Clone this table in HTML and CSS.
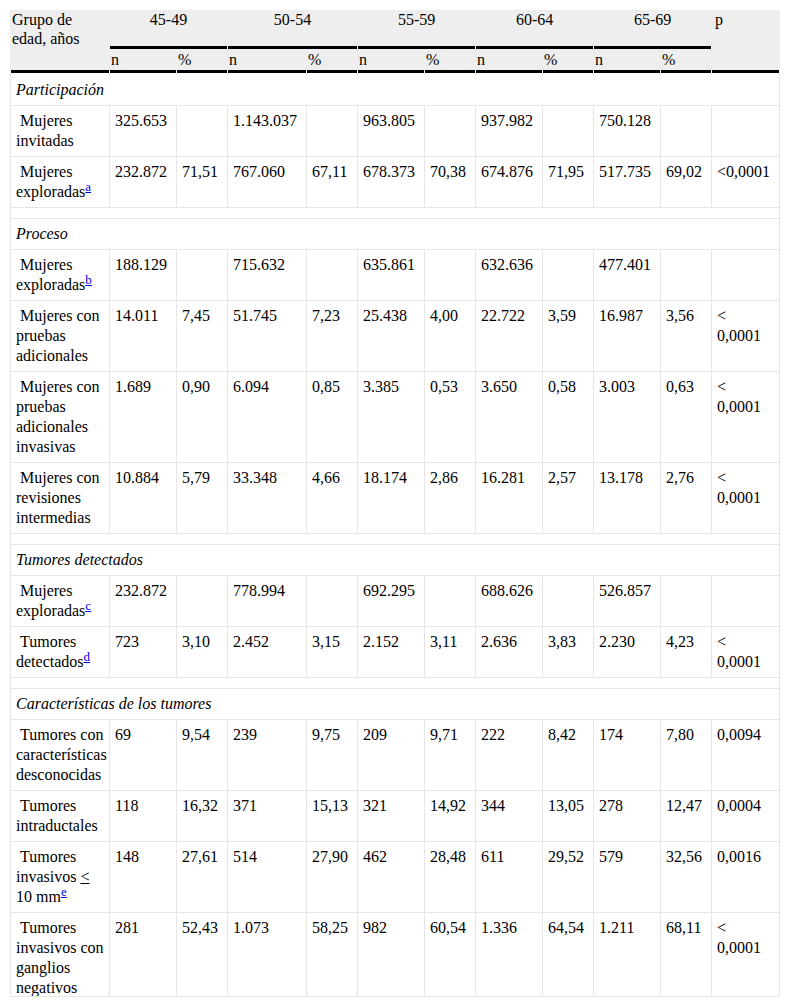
FILE: index.html
```html
<!DOCTYPE html>
<html lang="es">
<head>
<meta charset="utf-8">
<title>Tabla</title>
<link rel="stylesheet" href="styles.css">
</head>
<body>
<div class="wrap">
<table class="data">
  <colgroup>
    <col class="c-label">
    <col class="c-n"><col class="c-p">
    <col class="c-n2"><col class="c-p">
    <col class="c-n"><col class="c-p">
    <col class="c-n"><col class="c-p">
    <col class="c-n"><col class="c-p">
    <col class="c-pv">
  </colgroup>
  <thead>
    <tr class="h1">
      <th rowspan="2" class="first line-first">Grupo de edad, años</th>
      <th colspan="2" class="grp line">45-49</th>
      <th colspan="2" class="grp line">50-54</th>
      <th colspan="2" class="grp line">55-59</th>
      <th colspan="2" class="grp line">60-64</th>
      <th colspan="2" class="grp line">65-69</th>
      <th rowspan="2" class="pcol line">p</th>
    </tr>
    <tr class="h2">
      <th class="line">n</th><th class="line">%</th>
      <th class="line">n</th><th class="line">%</th>
      <th class="line">n</th><th class="line">%</th>
      <th class="line">n</th><th class="line">%</th>
      <th class="line">n</th><th class="line">%</th>
    </tr>
  </thead>
  <tbody>
    <tr class="sec sec-first"><td colspan="12">Participación</td></tr>
    <tr><td>&nbsp;Mujeres invitadas</td><td>325.653</td><td></td><td>1.143.037</td><td></td><td>963.805</td><td></td><td>937.982</td><td></td><td>750.128</td><td></td><td></td></tr>
    <tr><td>&nbsp;Mujeres exploradas<sup><a href="#a">a</a></sup></td><td>232.872</td><td>71,51</td><td>767.060</td><td>67,11</td><td>678.373</td><td>70,38</td><td>674.876</td><td>71,95</td><td>517.735</td><td>69,02</td><td>&lt;0,0001</td></tr>
    <tr class="gap"><td colspan="12"></td></tr>
    <tr class="sec"><td colspan="12">Proceso</td></tr>
    <tr><td>&nbsp;Mujeres exploradas<sup><a href="#b">b</a></sup></td><td>188.129</td><td></td><td>715.632</td><td></td><td>635.861</td><td></td><td>632.636</td><td></td><td>477.401</td><td></td><td></td></tr>
    <tr><td>&nbsp;Mujeres con pruebas adicionales</td><td>14.011</td><td>7,45</td><td>51.745</td><td>7,23</td><td>25.438</td><td>4,00</td><td>22.722</td><td>3,59</td><td>16.987</td><td>3,56</td><td>&lt; 0,0001</td></tr>
    <tr><td>&nbsp;Mujeres con pruebas adicionales invasivas</td><td>1.689</td><td>0,90</td><td>6.094</td><td>0,85</td><td>3.385</td><td>0,53</td><td>3.650</td><td>0,58</td><td>3.003</td><td>0,63</td><td>&lt; 0,0001</td></tr>
    <tr><td>&nbsp;Mujeres con revisiones intermedias</td><td>10.884</td><td>5,79</td><td>33.348</td><td>4,66</td><td>18.174</td><td>2,86</td><td>16.281</td><td>2,57</td><td>13.178</td><td>2,76</td><td>&lt; 0,0001</td></tr>
    <tr class="gap"><td colspan="12"></td></tr>
    <tr class="sec"><td colspan="12">Tumores detectados</td></tr>
    <tr><td>&nbsp;Mujeres exploradas<sup><a href="#c">c</a></sup></td><td>232.872</td><td></td><td>778.994</td><td></td><td>692.295</td><td></td><td>688.626</td><td></td><td>526.857</td><td></td><td></td></tr>
    <tr><td>&nbsp;Tumores detectados<sup><a href="#d">d</a></sup></td><td>723</td><td>3,10</td><td>2.452</td><td>3,15</td><td>2.152</td><td>3,11</td><td>2.636</td><td>3,83</td><td>2.230</td><td>4,23</td><td>&lt; 0,0001</td></tr>
    <tr class="gap"><td colspan="12"></td></tr>
    <tr class="sec"><td colspan="12">Características de los tumores</td></tr>
    <tr><td>&nbsp;Tumores con características desconocidas</td><td>69</td><td>9,54</td><td>239</td><td>9,75</td><td>209</td><td>9,71</td><td>222</td><td>8,42</td><td>174</td><td>7,80</td><td>0,0094</td></tr>
    <tr><td>&nbsp;Tumores intraductales</td><td>118</td><td>16,32</td><td>371</td><td>15,13</td><td>321</td><td>14,92</td><td>344</td><td>13,05</td><td>278</td><td>12,47</td><td>0,0004</td></tr>
    <tr><td>&nbsp;Tumores invasivos <u>&lt;</u> 10 mm<sup><a href="#e">e</a></sup></td><td>148</td><td>27,61</td><td>514</td><td>27,90</td><td>462</td><td>28,48</td><td>611</td><td>29,52</td><td>579</td><td>32,56</td><td>0,0016</td></tr>
    <tr><td>&nbsp;Tumores invasivos con ganglios negativos</td><td>281</td><td>52,43</td><td>1.073</td><td>58,25</td><td>982</td><td>60,54</td><td>1.336</td><td>64,54</td><td>1.211</td><td>68,11</td><td>&lt; 0,0001</td></tr>
  </tbody>
</table>
</div>
</body>
</html>
```

FILE: styles.css
```css
html, body {
  margin: 0;
  background: #fff;
}
body {
  padding: 10px;
  font-family: "Liberation Serif", "Times New Roman", serif;
  font-size: 16px;
  color: #000;
}
.wrap {
  width: 770px;
  height: 986px;
  overflow: hidden;
  border-bottom: 1px solid #e6e6e6;
}
.data {
  border-collapse: separate;
  border-spacing: 0;
  table-layout: fixed;
  width: 770px;
}
.c-label { width: 100px; }
.c-n { width: 67px; }
.c-n2 { width: 79px; }
.c-p { width: 51px; }
.c-pv { width: 68px; }

.data th {
  font-weight: normal;
  text-align: left;
  vertical-align: top;
  background-color: #eeeeee;
  line-height: 19px;
  padding: 0 1px;
  border-right: 1px solid transparent;
}
.data th.first {
  border-left: 1px solid transparent;
}
.data th.grp {
  text-align: center;
}
.data th.pcol {
  padding-left: 3px;
}
.h1 th.grp {
  padding-bottom: 20px;
}
.h2 th {
  padding-top: 1px;
  padding-bottom: 4px;
}
.line {
  background-image: linear-gradient(#000, #000), linear-gradient(#fff, #fff);
  background-repeat: no-repeat;
  background-origin: border-box;
  background-size: calc(100% - 1px) 3px, 1px 3px;
  background-position: left bottom, right bottom;
}
.line-first {
  background-image: linear-gradient(#000, #000), linear-gradient(#fff, #fff), linear-gradient(#fff, #fff);
  background-repeat: no-repeat;
  background-origin: border-box;
  background-size: calc(100% - 2px) 3px, 1px 3px, 1px 3px;
  background-position: 1px 100%, left bottom, right bottom;
}

.data td {
  text-align: left;
  vertical-align: top;
  padding: 5px;
  line-height: 20px;
  border-right: 1px solid #e6e6e6;
  border-bottom: 1px solid #e6e6e6;
}
.data td:first-child {
  border-left: 1px solid #e6e6e6;
}
.sec td {
  font-style: italic;
}
.sec-first td {
  padding-top: 7px;
}
.data sup {
  line-height: 0;
  font-size: 13px;
}
.data sup a {
  color: #0000ee;
}
```
